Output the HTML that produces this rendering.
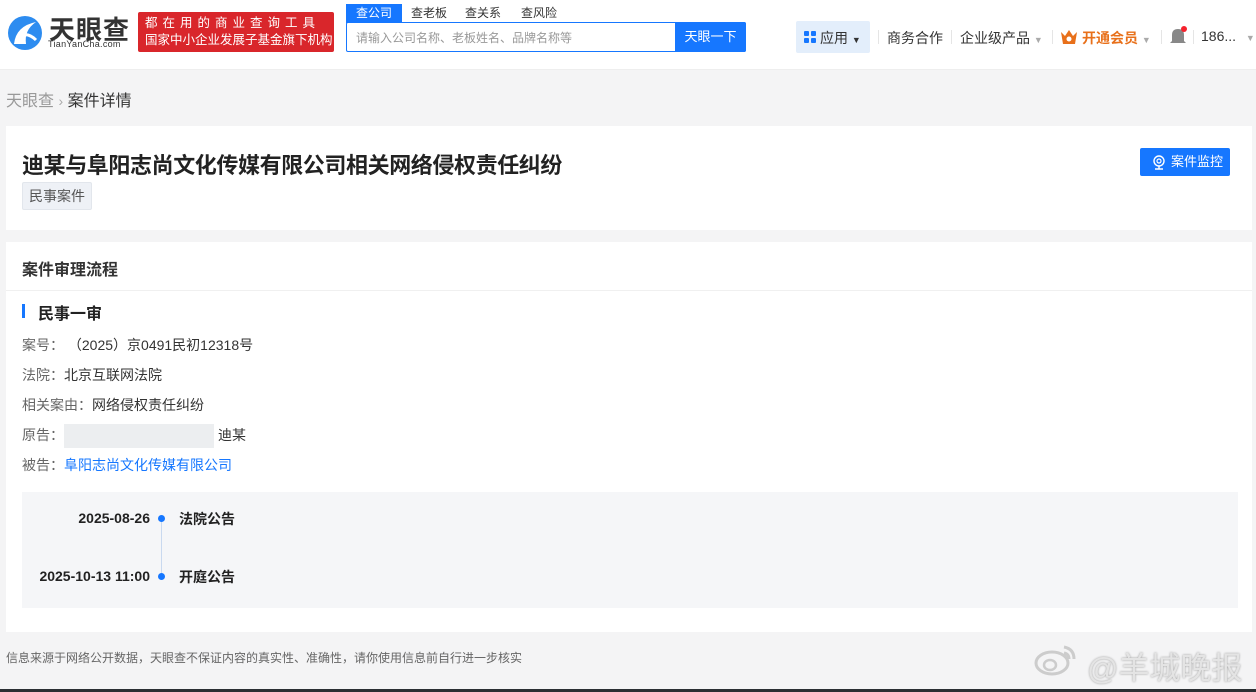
<!DOCTYPE html>
<html><head><meta charset="utf-8"><style>
*{margin:0;padding:0;box-sizing:border-box}
body{width:1256px;height:692px;overflow:hidden;background:#f4f4f5;font-family:"Liberation Sans","Noto Sans CJK SC",sans-serif;color:#333;position:relative}
.abs{position:absolute}
.hdr{left:0;top:0;width:1256px;height:70px;background:#fff;border-bottom:1px solid #eee}
</style></head><body>
<div class="abs hdr">
  <svg class="abs" style="left:6px;top:14px" width="38" height="38" viewBox="0 0 38 38"><circle cx="19" cy="19" r="17" fill="#2d8cf0"/><path d="M8 30 Q10 12 30 8 Q18 16 20 30 Z" fill="#fff"/><path d="M14 22 Q22 18 30 26" stroke="#fff" stroke-width="3" fill="none"/></svg>
  <div class="abs" style="left:49px;top:10px;font-size:26px;font-weight:bold;color:#333;letter-spacing:1px">天眼查</div>
  <div class="abs" style="left:48px;top:39px;font-size:9px;color:#333;letter-spacing:0.3px">TianYanCha.com</div>
  <div class="abs" style="left:138px;top:12px;width:196px;height:40px;background:#d9262b;border-radius:2px;color:#fff;font-size:12.5px;line-height:17px;padding:3px 0 0 7px"><div style="letter-spacing:5px">都在用的商业查询工具</div><div>国家中小企业发展子基金旗下机构</div></div>
  <div class="abs" style="left:346px;top:4px;width:56px;height:19px;background:#1677ff;color:#fff;font-size:12px;text-align:center;line-height:18px">查公司</div>
  <div class="abs" style="left:411px;top:4px;font-size:12px;line-height:18px;color:#333">查老板</div>
  <div class="abs" style="left:465px;top:4px;font-size:12px;line-height:18px;color:#333">查关系</div>
  <div class="abs" style="left:521px;top:4px;font-size:12px;line-height:18px;color:#333">查风险</div>
  <div class="abs" style="left:346px;top:22px;width:400px;height:30px;border:1px solid #1677ff;border-radius:2px;background:#fff"></div>
  <div class="abs" style="left:356px;top:29px;font-size:12px;color:#999">请输入公司名称、老板姓名、品牌名称等</div>
  <div class="abs" style="left:675px;top:22px;width:71px;height:30px;background:#1677ff;color:#fff;font-size:13px;text-align:center;line-height:30px;border-radius:0 2px 2px 0">天眼一下</div>
  <div class="abs" style="left:796px;top:21px;width:74px;height:32px;background:#e3eefb;border-radius:2px"></div>
  <svg class="abs" style="left:804px;top:31px" width="12" height="12"><rect x="0" y="0" width="5" height="5" rx="1" fill="#1677ff"/><rect x="7" y="0" width="5" height="5" rx="1" fill="#1677ff"/><rect x="0" y="7" width="5" height="5" rx="1" fill="#1677ff"/><rect x="7" y="7" width="5" height="5" rx="1" fill="#1677ff"/></svg>
  <div class="abs" style="left:820px;top:28px;font-size:14px;color:#333">应用 <span style="font-size:9px">▼</span></div>
  <div class="abs" style="left:878px;top:30px;width:1px;height:14px;background:#e5e5e5"></div>
  <div class="abs" style="left:887px;top:28px;font-size:14px;color:#333">商务合作</div>
  <div class="abs" style="left:951px;top:30px;width:1px;height:14px;background:#e5e5e5"></div>
  <div class="abs" style="left:960px;top:28px;font-size:14px;color:#333">企业级产品 <span style="font-size:9px;color:#aaa">▼</span></div>
  <div class="abs" style="left:1052px;top:30px;width:1px;height:14px;background:#e5e5e5"></div>
  <svg class="abs" style="left:1061px;top:30px" width="16" height="14"><path d="M0 2 L4 6 L8 0 L12 6 L16 2 L14 14 L2 14 Z" fill="#e8701a"/><circle cx="8" cy="9" r="2.5" fill="#fff"/></svg>
  <div class="abs" style="left:1082px;top:28px;font-size:14px;color:#e8701a;font-weight:bold">开通会员 <span style="font-size:9px;color:#aaa;font-weight:normal">▼</span></div>
  <div class="abs" style="left:1161px;top:30px;width:1px;height:14px;background:#e5e5e5"></div>
  <svg class="abs" style="left:1169px;top:26px" width="18" height="20"><path d="M3 15 L3 9 Q3 3 9 3 Q15 3 15 9 L15 15 L17 17 L1 17 Z" fill="#888"/><circle cx="15" cy="3" r="3" fill="#f5222d"/></svg>
  <div class="abs" style="left:1193px;top:30px;width:1px;height:14px;background:#e5e5e5"></div>
  <div class="abs" style="left:1201px;top:28px;font-size:14px;color:#333">186... <span style="font-size:9px;color:#aaa;margin-left:6px">▼</span></div>
</div>
<div class="abs" style="left:6px;top:87px;font-size:16px;color:#999">天眼查 <span style="color:#aaa;font-size:14px">›</span> <span style="color:#333">案件详情</span></div>

<div class="abs" style="left:6px;top:126px;width:1246px;height:104px;background:#fff"></div>
<div class="abs" style="left:22px;top:148px;font-size:22px;font-weight:bold;color:#222;letter-spacing:-0.4px">迪某与阜阳志尚文化传媒有限公司相关网络侵权责任纠纷</div>
<div class="abs" style="left:22px;top:182px;width:70px;height:28px;background:#eef1f6;border:1px solid #e2e6ec;border-radius:2px;font-size:14px;color:#555;line-height:26px;text-align:center">民事案件</div>
<div class="abs" style="left:1140px;top:148px;width:90px;height:28px;background:#1677ff;border-radius:2px;color:#fff;font-size:13px;line-height:28px;padding-left:31px">案件监控</div>
<svg class="abs" style="left:1152px;top:155px" width="14" height="15"><circle cx="7" cy="6" r="5" stroke="#fff" stroke-width="1.4" fill="none"/><circle cx="7" cy="6" r="2" stroke="#fff" stroke-width="1.2" fill="none"/><path d="M3 14 L11 14 M7 11 L7 14" stroke="#fff" stroke-width="1.4"/></svg>

<div class="abs" style="left:6px;top:242px;width:1246px;height:390px;background:#fff"></div>
<div class="abs" style="left:6px;top:290px;width:1246px;height:1px;background:#f0f0f0"></div>
<div class="abs" style="left:22px;top:256px;font-size:16px;font-weight:bold;color:#333">案件审理流程</div>
<div class="abs" style="left:22px;top:304px;width:3px;height:14px;background:#1677ff"></div>
<div class="abs" style="left:38px;top:300px;font-size:16px;font-weight:bold;color:#222">民事一审</div>
<div class="abs" style="left:22px;top:330px;font-size:14px;line-height:30px;color:#333">
<div><span style="color:#666">案号：</span> （2025）京0491民初12318号</div>
<div><span style="color:#666">法院：</span>北京互联网法院</div>
<div><span style="color:#666">相关案由：</span>网络侵权责任纠纷</div>
<div><span style="color:#666">原告：</span><span style="display:inline-block;width:150px;height:24px;background:#eceef0;vertical-align:middle;margin-right:4px"></span>迪某</div>
<div><span style="color:#666">被告：</span><span style="color:#1677ff">阜阳志尚文化传媒有限公司</span></div>
</div>
<div class="abs" style="left:22px;top:492px;width:1216px;height:116px;background:#f5f6f8"></div>
<div class="abs" style="left:161px;top:518px;width:1px;height:58px;background:#c9d9ef"></div>
<div class="abs" style="left:158px;top:515px;width:7px;height:7px;border-radius:50%;background:#1677ff"></div>
<div class="abs" style="left:158px;top:573px;width:7px;height:7px;border-radius:50%;background:#1677ff"></div>
<div class="abs" style="left:0;top:510px;width:150px;text-align:right;font-size:14px;font-weight:bold;color:#222">2025-08-26</div>
<div class="abs" style="left:179px;top:509px;font-size:14px;font-weight:bold;color:#222">法院公告</div>
<div class="abs" style="left:0;top:568px;width:150px;text-align:right;font-size:14px;font-weight:bold;color:#222">2025-10-13 11:00</div>
<div class="abs" style="left:179px;top:567px;font-size:14px;font-weight:bold;color:#222">开庭公告</div>

<div class="abs" style="left:6px;top:649px;font-size:12px;color:#666">信息来源于网络公开数据，天眼查不保证内容的真实性、准确性，请你使用信息前自行进一步核实</div>
<svg class="abs" style="left:1034px;top:641px" width="46" height="36"><ellipse cx="18" cy="22" rx="16" ry="11" fill="none" stroke="#ccc" stroke-width="3"/><ellipse cx="16" cy="24" rx="6" ry="5" fill="none" stroke="#ccc" stroke-width="2.5"/><path d="M30 6 Q40 8 40 18 M30 12 Q35 13 35 18" stroke="#ccc" stroke-width="3" fill="none"/></svg>
<div class="abs" style="left:1087px;top:643px;font-size:31px;color:#e4e4e4;text-shadow:0 0 2px #999">@羊城晚报</div>
<div class="abs" style="left:0;top:689px;width:1256px;height:3px;background:#2b2f33"></div>
</body></html>
